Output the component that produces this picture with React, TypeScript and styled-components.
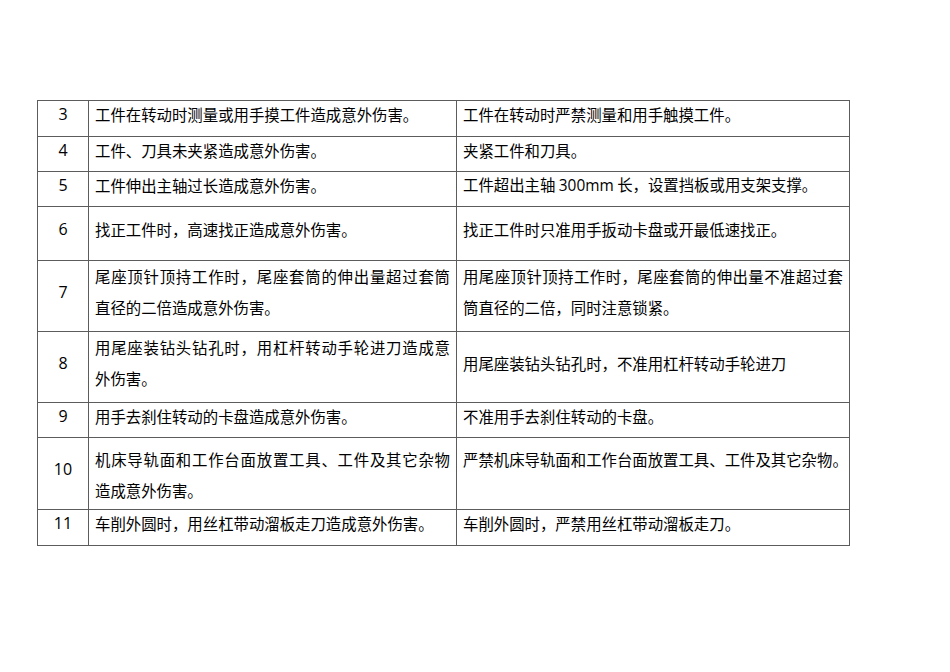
import React from "react";
import styled, { createGlobalStyle } from "styled-components";

const Global = createGlobalStyle`
  html, body { margin: 0; padding: 0; background: #ffffff; }
  body { font-family: "Noto Sans CJK SC", "Noto Sans", sans-serif; color: #000; }
`;

const Page = styled.div`
  width: 950px;
  height: 672px;
  box-sizing: border-box;
  padding: 100px 0 0 37px;
`;

const Table = styled.table`
  border-collapse: collapse;
  table-layout: fixed;
  width: 811px;
  font-size: 15.4px;
  line-height: 31px;
`;

const Row = styled.tr<{ $h: number }>`
  height: ${(p) => p.$h}px;
`;

const NumCell = styled.td`
  width: 50px;
  border: 1px solid #5c5c5c;
  text-align: center;
  vertical-align: middle;
  padding: 0;
  font-family: "Open Sans", "Noto Sans CJK SC", sans-serif;
  font-size: 16px;
`;

const TextCell = styled.td<{ $w: number; $top?: number }>`
  width: ${(p) => p.$w}px;
  border: 1px solid #5c5c5c;
  vertical-align: ${(p) => (p.$top !== undefined ? "top" : "middle")};
  padding: ${(p) => (p.$top !== undefined ? `${p.$top}px 6px 0 6px` : "0 6px 0 6px")};
  white-space: nowrap;
`;

const Lines = styled.div<{ $lift: number }>`
  margin-top: ${(p) => -p.$lift}px;
`;

const Line = styled.span<{ $justify?: boolean }>`
  display: block;
  text-align: ${(p) => (p.$justify ? "justify" : "left")};
  text-align-last: ${(p) => (p.$justify ? "justify" : "left")};
  text-justify: inter-character;
  white-space: ${(p) => (p.$justify ? "normal" : "nowrap")};
`;

const Latin = styled.span`
  font-family: "Open Sans", sans-serif;
`;

type Cell = { lines: React.ReactNode[]; top?: number; justify?: boolean };
type RowData = { n: string; h: number; a: Cell; b: Cell };

const rows: RowData[] = [
  {
    n: "3",
    h: 36,
    a: { lines: ["工件在转动时测量或用手摸工件造成意外伤害。"] },
    b: { lines: ["工件在转动时严禁测量和用手触摸工件。"] },
  },
  {
    n: "4",
    h: 35,
    a: { lines: ["工件、刀具未夹紧造成意外伤害。"] },
    b: { lines: ["夹紧工件和刀具。"] },
  },
  {
    n: "5",
    h: 35,
    a: { lines: ["工件伸出主轴过长造成意外伤害。"] },
    b: {
      lines: [
        <>
          工件超出主轴 <Latin>300mm</Latin> 长，设置挡板或用支架支撑。
        </>,
      ],
    },
  },
  {
    n: "6",
    h: 54,
    a: { lines: ["找正工件时，高速找正造成意外伤害。"] },
    b: { lines: ["找正工件时只准用手扳动卡盘或开最低速找正。"] },
  },
  {
    n: "7",
    h: 71,
    a: { lines: ["尾座顶针顶持工作时，尾座套筒的伸出量超过套筒", "直径的二倍造成意外伤害。"], justify: true },
    b: { lines: ["用尾座顶针顶持工作时，尾座套筒的伸出量不准超过套", "筒直径的二倍，同时注意锁紧。"], justify: true },
  },
  {
    n: "8",
    h: 71,
    a: { lines: ["用尾座装钻头钻孔时，用杠杆转动手轮进刀造成意", "外伤害。"], justify: true },
    b: { lines: ["用尾座装钻头钻孔时，不准用杠杆转动手轮进刀"] },
  },
  {
    n: "9",
    h: 35,
    a: { lines: ["用手去刹住转动的卡盘造成意外伤害。"] },
    b: { lines: ["不准用手去刹住转动的卡盘。"] },
  },
  {
    n: "10",
    h: 72,
    a: { lines: ["机床导轨面和工作台面放置工具、工件及其它杂物", "造成意外伤害。"], justify: true, top: 6 },
    b: { lines: ["严禁机床导轨面和工作台面放置工具、工件及其它杂物。"], top: 6 },
  },
  {
    n: "11",
    h: 36,
    a: { lines: ["车削外圆时，用丝杠带动溜板走刀造成意外伤害。"] },
    b: { lines: ["车削外圆时，严禁用丝杠带动溜板走刀。"] },
  },
];

function Content({ cell }: { cell: Cell }) {
  return (
    <Lines $lift={cell.top !== undefined ? 0 : 8}>
      {cell.lines.map((l, i) => (
        <Line key={i} $justify={cell.justify && i < cell.lines.length - 1}>
          {l}
        </Line>
      ))}
    </Lines>
  );
}

export default function App() {
  return (
    <Page>
      <Global />
      <Table>
        <tbody>
          {rows.map((r) => (
            <Row key={r.n} $h={r.h}>
              <NumCell>
                <Lines $lift={8}>{r.n}</Lines>
              </NumCell>
              <TextCell $w={355} $top={r.a.top}>
                <Content cell={r.a} />
              </TextCell>
              <TextCell $w={380} $top={r.b.top}>
                <Content cell={r.b} />
              </TextCell>
            </Row>
          ))}
        </tbody>
      </Table>
    </Page>
  );
}
